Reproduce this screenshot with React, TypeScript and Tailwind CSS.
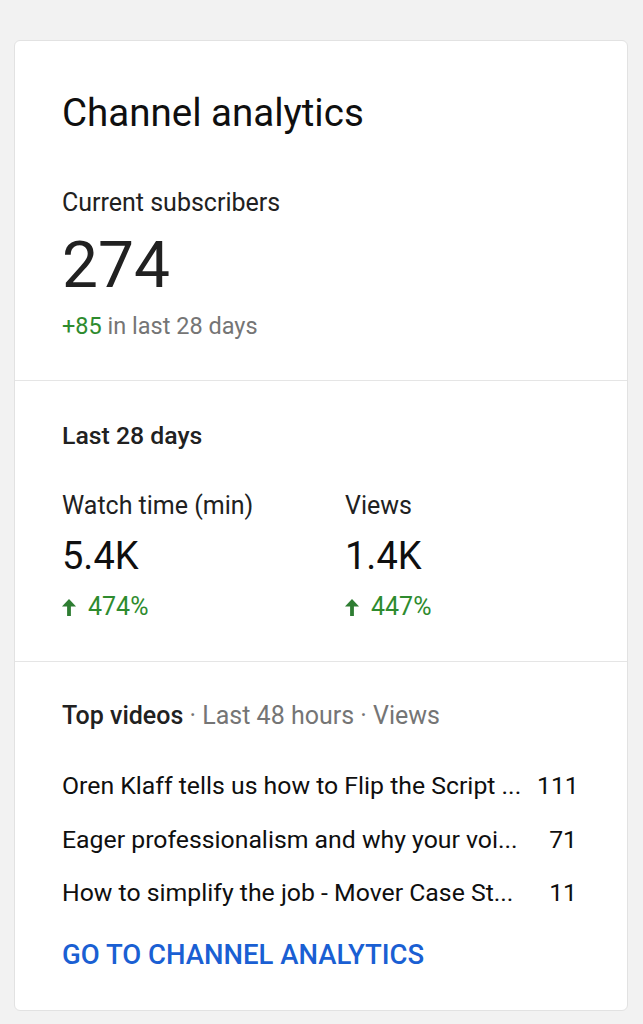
import React from "react";

const Arrow = () => (
  <svg width="14" height="17" viewBox="0 0 14 17" className="shrink-0">
    <polygon points="7,0 14,7.5 0,7.5" fill="#2e7d32" />
    <rect x="5.1" y="6.5" width="3.8" height="10.5" fill="#2e7d32" />
  </svg>
);

const videos = [
  { title: "Oren Klaff tells us how to Flip the Script ...", views: "111" },
  { title: "Eager professionalism and why your voi...", views: "71" },
  { title: "How to simplify the job - Mover Case St...", views: "11" },
];

export default function App() {
  return (
    <div
      className="min-h-[1024px] bg-[#f2f2f2] pt-[40px] pl-[14px] pr-[15px] pb-[14px]"
      style={{ fontFamily: "Roboto, 'Noto Sans', sans-serif" }}
    >
      <div className="bg-white border border-[#e2e2e2] rounded-[6px]">
        {/* Section 1 */}
        <div className="pl-[47px] pr-[47px] pt-[50px] pb-[40px] border-b border-[#e5e5e5]">
          <div className="text-[38.5px] leading-[44px] text-[#0f0f0f]">Channel analytics</div>
          <div className="mt-[52px] text-[25px] leading-[32px] text-[#212121]">Current subscribers</div>
          <div className="mt-[11px] text-[64px] leading-[72px] text-[#212121]">274</div>
          <div className="mt-[10px] text-[23.5px] leading-[28px] text-[#757575]">
            <span className="text-[#2e8b2e]">+85</span> in last 28 days
          </div>
        </div>

        {/* Section 2 */}
        <div className="pl-[47px] pr-[47px] pt-[41px] pb-[40px] border-b border-[#e5e5e5]">
          <div className="text-[24.8px] leading-[28px] font-medium text-[#212121]">Last 28 days</div>
          <div className="mt-[40px] flex">
            <div className="w-[283px]">
              <div className="text-[25px] leading-[32px] text-[#212121]">Watch time (min)</div>
              <div className="mt-[12px] text-[38px] leading-[44px] text-[#0f0f0f]">5.4K</div>
              <div className="mt-[15px] flex items-center gap-[12px] text-[25px] leading-[28px] text-[#2e8b2e]">
                <Arrow />
                <span>474%</span>
              </div>
            </div>
            <div>
              <div className="text-[25px] leading-[32px] text-[#212121]">Views</div>
              <div className="mt-[12px] text-[38px] leading-[44px] text-[#0f0f0f]">1.4K</div>
              <div className="mt-[15px] flex items-center gap-[12px] text-[25px] leading-[28px] text-[#2e8b2e]">
                <Arrow />
                <span>447%</span>
              </div>
            </div>
          </div>
        </div>

        {/* Section 3 */}
        <div className="pl-[47px] pr-[50px] pt-[40px] pb-[39px]">
          <div className="text-[25px] leading-[28px] text-[#757575]">
            <span className="font-medium text-[#212121]">Top videos</span> · Last 48 hours · Views
          </div>
          <div className="mt-[40px] flex flex-col gap-[21.5px]">
            {videos.map((v) => (
              <div key={v.title} className="flex items-center gap-[12px] text-[24.8px] leading-[32px] text-[#0f0f0f]">
                <div className="flex-1 min-w-0 whitespace-nowrap overflow-hidden">{v.title}</div>
                <div className="w-[40px] text-right">{v.views}</div>
              </div>
            ))}
          </div>
          <div className="mt-[30px] text-[27.5px] leading-[32px] font-medium text-[#1a5fd3] uppercase">
            Go to channel analytics
          </div>
        </div>
      </div>
    </div>
  );
}
